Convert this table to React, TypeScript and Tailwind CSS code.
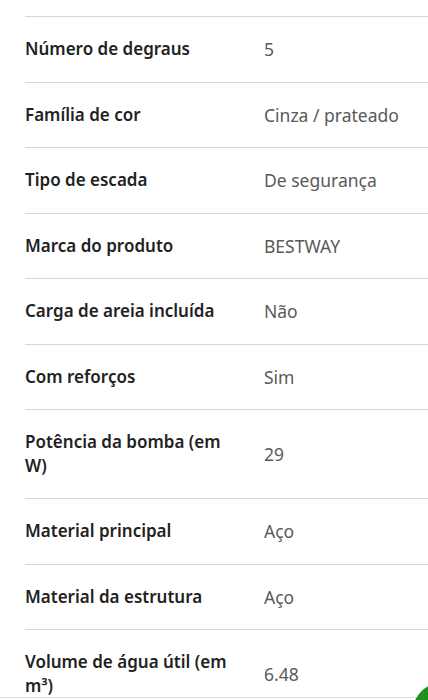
const specs: { label: string; value: string }[] = [
  { label: 'Número de degraus', value: '5' },
  { label: 'Família de cor', value: 'Cinza / prateado' },
  { label: 'Tipo de escada', value: 'De segurança' },
  { label: 'Marca do produto', value: 'BESTWAY' },
  { label: 'Carga de areia incluída', value: 'Não' },
  { label: 'Com reforços', value: 'Sim' },
  { label: 'Potência da bomba (em W)', value: '29' },
  { label: 'Material principal', value: 'Aço' },
  { label: 'Material da estrutura', value: 'Aço' },
  { label: 'Volume de água útil (em m³)', value: '6.48' },
];

export default function App() {
  return (
    <div className="relative h-[700px] w-[428px] overflow-hidden bg-white font-['Noto_Sans',sans-serif]">
      <div className="pt-4 pl-[25px]">
        {specs.map((s) => (
          <div
            key={s.label}
            className="flex min-h-[65.5px] items-center border-t border-[#d6d6d6] py-5 text-[17px] leading-6"
          >
            <div className="w-[239px] shrink-0 pr-5 font-semibold text-[#222]">{s.label}</div>
            <div className="text-[17.5px] text-[#5a5a5a]">{s.value}</div>
          </div>
        ))}
      </div>

      {/* bottom bar edge + floating button */}
      <div className="absolute bottom-0 left-0 right-0 h-[3px] border-t border-[#dcdcdc] bg-white" />
      <div className="absolute left-[412px] top-[682px] h-16 w-16 rounded-full bg-[#1f8f1f]" />
    </div>
  );
}
